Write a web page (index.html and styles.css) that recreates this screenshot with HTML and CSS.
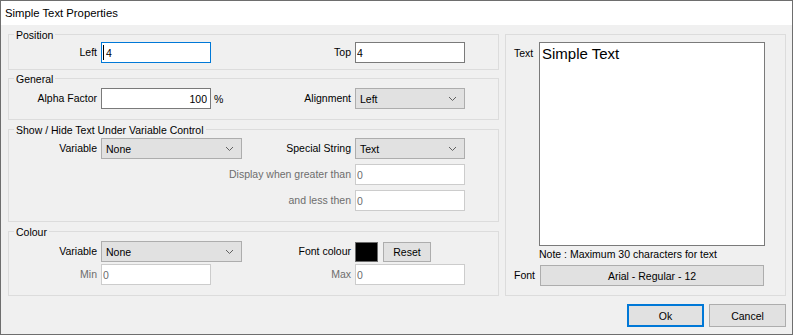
FILE: index.html
```html
<!DOCTYPE html>
<html>

<head>
    <meta charset="UTF-8">
    <title>Simple Text Properties</title>
    <link rel="stylesheet" href="styles.css">
</head>

<body>
    <div class="window">
        <div class="titlebar">Simple Text Properties</div>

        <div class="content">
            <div class="columns">
                <div class="left">

                    <fieldset class="group" id="positionGroup">
                        <legend>Position</legend>
                        <div class="grid">
                            <label for="posLeft">Left</label>
                            <span class="edit-wrap">
                                <input type="text" id="posLeft" class="edit focused" value="4">
                                <span class="caret"></span>
                            </span>
                            <label for="posTop">Top</label>
                            <input type="text" id="posTop" class="edit" value="4">
                        </div>
                    </fieldset>

                    <fieldset class="group" id="generalGroup">
                        <legend>General</legend>
                        <div class="grid">
                            <label for="alpha">Alpha Factor</label>
                            <span class="with-unit">
                                <input type="text" id="alpha" class="edit number" value="100">
                                <span>%</span>
                            </span>
                            <label>Alignment</label>
                            <div class="combo">
                                <span>Left</span>
                                <svg width="7" height="4" viewBox="0 0 7 4"><polyline points="0,0 3.5,3.5 7,0" fill="none" stroke="#606060" stroke-width="1"/></svg>
                            </div>
                        </div>
                    </fieldset>

                    <fieldset class="group" id="showGroup">
                        <legend>Show / Hide Text Under Variable Control</legend>
                        <div class="grid">
                            <label>Variable</label>
                            <div class="combo">
                                <span>None</span>
                                <svg width="7" height="4" viewBox="0 0 7 4"><polyline points="0,0 3.5,3.5 7,0" fill="none" stroke="#606060" stroke-width="1"/></svg>
                            </div>
                            <label>Special String</label>
                            <div class="combo">
                                <span>Text</span>
                                <svg width="7" height="4" viewBox="0 0 7 4"><polyline points="0,0 3.5,3.5 7,0" fill="none" stroke="#606060" stroke-width="1"/></svg>
                            </div>

                            <label class="dim wide" for="greater">Display when greater than</label>
                            <input type="text" id="greater" class="edit dim-edit" value="0" disabled>

                            <label class="dim wide" for="less">and less then</label>
                            <input type="text" id="less" class="edit dim-edit" value="0" disabled>
                        </div>
                    </fieldset>

                    <fieldset class="group" id="colourGroup">
                        <legend>Colour</legend>
                        <div class="grid tight">
                            <label>Variable</label>
                            <div class="combo">
                                <span>None</span>
                                <svg width="7" height="4" viewBox="0 0 7 4"><polyline points="0,0 3.5,3.5 7,0" fill="none" stroke="#606060" stroke-width="1"/></svg>
                            </div>
                            <label>Font colour</label>
                            <span class="colour-pick">
                                <span class="swatch"></span>
                                <button type="button" class="btn reset">Reset</button>
                            </span>

                            <label class="dim" for="min">Min</label>
                            <input type="text" id="min" class="edit dim-edit" value="0" disabled>
                            <label class="dim" for="max">Max</label>
                            <input type="text" id="max" class="edit dim-edit" value="0" disabled>
                        </div>
                    </fieldset>
                </div>

                <div class="panel">
                    <label class="text-label" for="textValue">Text</label>
                    <textarea id="textValue" class="text-box">Simple Text</textarea>
                    <div class="note">Note : Maximum 30 characters for text</div>
                    <label class="font-label">Font</label>
                    <button type="button" class="btn font-btn">Arial - Regular - 12</button>
                </div>
            </div>

            <div class="buttons">
                <button type="button" class="btn dialog-btn default">Ok</button>
                <button type="button" class="btn dialog-btn">Cancel</button>
            </div>
        </div>
    </div>
</body>

</html>
```

FILE: styles.css
```css
body {
    margin: 0;
    font-family: "Liberation Sans", Arial, sans-serif;
    font-size: 10.5px;
    color: #000;
    background-color: #f0f0f0;
}

.window {
    width: 793px;
    height: 335px;
    box-sizing: border-box;
    border: 1px solid #6e6e6e;
    background-color: #f0f0f0;
}

.titlebar {
    height: 24px;
    line-height: 24px;
    padding-left: 4px;
    background-color: #fff;
    font-size: 11.3px;
}

.content {
    padding: 2px 6px 0 7px;
}

.columns {
    display: flex;
    gap: 6px;
    align-items: flex-start;
}

.left {
    width: 491px;
    display: flex;
    flex-direction: column;
}

/* group boxes */
.group {
    margin: 0;
    min-width: 0;
    padding: 0 0 10px;
    border: 1px solid #dcdcdc;
}

.group legend {
    margin-left: 5px;
    padding: 2px 2px 0;
    line-height: 13px;
}

#positionGroup {
    padding-bottom: 6px;
}

#generalGroup {
    margin-top: 1px;
    padding-top: 2px;
}

#showGroup {
    margin-top: 2px;
    padding-top: 1px;
}

#colourGroup {
    margin-top: 2px;
    padding-top: 2px;
}

.grid {
    display: grid;
    grid-template-columns: 88px 141px 105px 110px;
    column-gap: 4px;
    row-gap: 5px;
    align-items: center;
}

.grid.tight {
    row-gap: 2px;
}

.grid label {
    justify-self: end;
    line-height: 13px;
    white-space: nowrap;
}

.grid label.wide {
    grid-column: 1 / 4;
}

.dim {
    color: #6d6d6d;
}

/* edit boxes */
.edit {
    width: 110px;
    height: 21px;
    box-sizing: border-box;
    margin: 0;
    padding: 0 2px 0 1px;
    border: 1px solid #7a7a7a;
    background-color: #fff;
    font: inherit;
    color: #000;
    outline: none;
}

.edit.focused {
    border-color: #0078d7;
    padding-left: 4px;
}

.edit.number {
    text-align: right;
    padding-right: 3px;
}

.edit.dim-edit {
    border-color: #cccccc;
    background-color: #fff;
    color: #6d6d6d;
}

.edit-wrap {
    position: relative;
    display: block;
    width: 110px;
    height: 21px;
}

.caret {
    position: absolute;
    left: 2px;
    top: 3px;
    width: 1px;
    height: 15px;
    background-color: #000;
}

.with-unit {
    display: flex;
    align-items: center;
    gap: 3px;
}

/* drop-down lists */
.combo {
    height: 21px;
    box-sizing: border-box;
    display: flex;
    align-items: center;
    justify-content: space-between;
    padding: 0 8px 0 4px;
    border: 1px solid #adadad;
    background-color: #e1e1e1;
}

.colour-pick {
    display: flex;
    align-items: center;
    gap: 5px;
}

.swatch {
    width: 23px;
    height: 20px;
    box-sizing: border-box;
    border: 1px solid #6d6d6d;
    background-color: #000;
}

/* buttons */
.btn {
    margin: 0;
    padding: 0;
    box-sizing: border-box;
    border: 1px solid #adadad;
    background-color: #e1e1e1;
    font: inherit;
    color: #000;
}

.reset {
    width: 48px;
    height: 20px;
}

/* text panel */
.panel {
    width: 281px;
    height: 262px;
    box-sizing: border-box;
    margin-top: 7px;
    padding: 7px 0 0 8px;
    border: 1px solid #dcdcdc;
    display: grid;
    grid-template-columns: 25px 226px;
    grid-template-rows: 204px auto auto;
    align-content: start;
    align-items: start;
}

.text-label {
    padding-top: 5px;
    line-height: 13px;
}

.text-box {
    width: 226px;
    height: 204px;
    box-sizing: border-box;
    margin: 0;
    padding: 2px 2px;
    border: 1px solid #7a7a7a;
    resize: none;
    font-family: "Liberation Sans", Arial, sans-serif;
    font-size: 15px;
    line-height: 18px;
    color: #000;
    background-color: #fff;
    outline: none;
}

.note {
    grid-column: 2;
    margin-top: 2px;
    line-height: 13px;
}

.font-label {
    align-self: center;
    margin-top: 4px;
    line-height: 13px;
}

.font-btn {
    width: 224px;
    height: 21px;
    margin: 4px 0 0 1px;
}

.buttons {
    display: flex;
    justify-content: flex-end;
    gap: 5px;
    margin-top: 8px;
}

.dialog-btn {
    width: 77px;
    height: 23px;
}

.dialog-btn.default {
    border: 2px solid #0078d7;
}
```
